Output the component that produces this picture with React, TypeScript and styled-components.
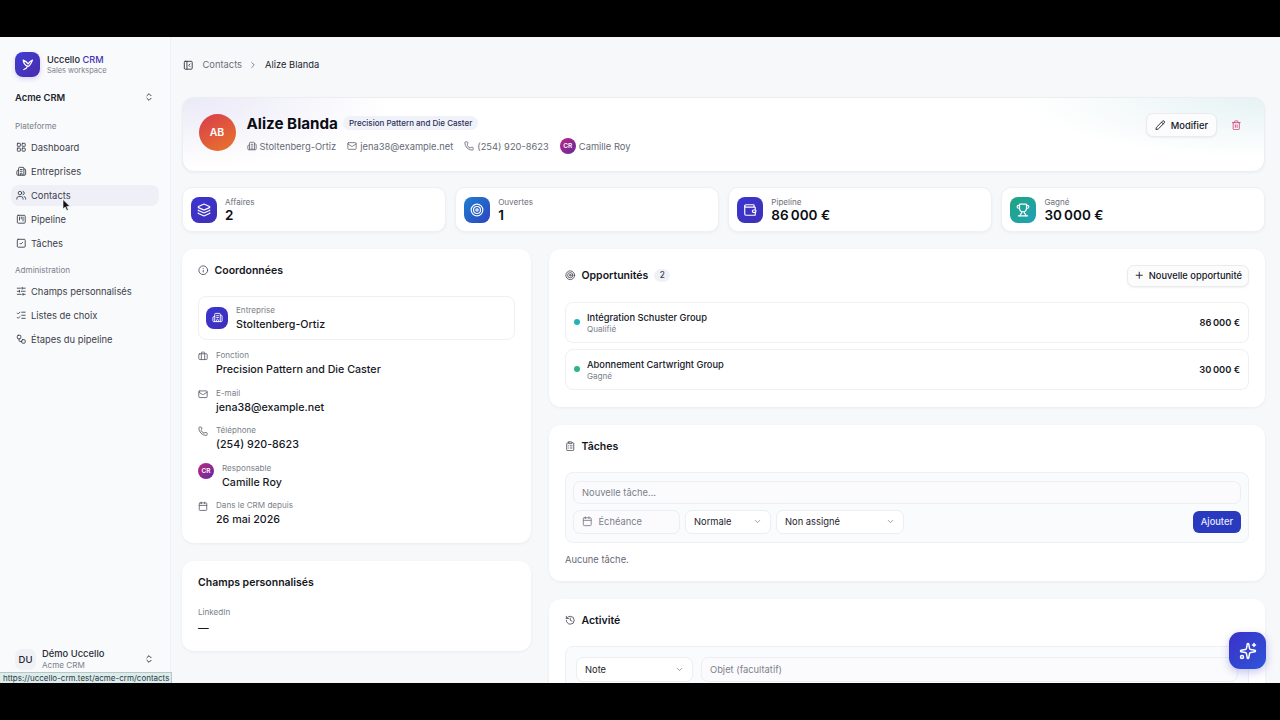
import React from "react";
import styled, { createGlobalStyle } from "styled-components";
import {
  Building2,
  Briefcase,
  Calendar,
  ChevronDown,
  ChevronRight,
  ChevronsUpDown,
  ClipboardList,
  History,
  Info,
  Layers,
  LayoutGrid,
  ListChecks,
  Mail,
  PanelLeftClose,
  Pencil,
  Phone,
  Plus,
  SlidersHorizontal,
  Sparkles,
  SquareCheck,
  SquareKanban,
  Target,
  Trash2,
  Trophy,
  Users,
  Wallet,
  Workflow,
} from "lucide-react";

const GlobalStyle = createGlobalStyle`
  html, body { margin: 0; padding: 0; background: #000; }
  body { font-family: Inter, "Noto Sans", sans-serif; color: #0b0d14; }
  * { box-sizing: border-box; }
`;

const Stage = styled.div`
  width: 1280px;
  height: 720px;
  padding: 37px 0;
  background: #000;
  overflow: hidden;
`;

const Frame = styled.div`
  position: relative;
  display: flex;
  height: 646px;
  background: #f7f8fa;
  overflow: hidden;
`;

const Sidebar = styled.aside`
  width: 170.5px;
  flex: none;
  display: flex;
  flex-direction: column;
  padding: 15px 11px 13px;
  background: #f9fafc;
  border-right: 1px solid #f0f1f4;
`;

const Brand = styled.div`
  display: flex;
  align-items: center;
  gap: 7px;
  padding-left: 4px;
`;

const Logo = styled.div`
  width: 25px;
  height: 25px;
  border-radius: 8px;
  display: flex;
  align-items: center;
  justify-content: center;
  color: #fff;
  background: linear-gradient(135deg, #3f3fd0, #4a2bb0);
  box-shadow: 0 2px 5px rgba(70, 60, 200, 0.2);
`;

const BrandName = styled.div`
  font-size: 9.2px;
  line-height: 12px;
  font-weight: 500;
  color: #20222c;
`;

const BrandAccent = styled.span`
  color: #4532b4;
`;

const BrandSub = styled.div`
  font-size: 7.4px;
  line-height: 9px;
  color: #7d818c;
`;

const Workspace = styled.div`
  display: flex;
  align-items: center;
  justify-content: space-between;
  margin-top: 13px;
  padding: 0 5px 0 4px;
  height: 14px;
  font-size: 9.4px;
  font-weight: 600;
  color: #22242e;
`;

const GroupLabel = styled.div`
  margin-top: ${({ $top }: { $top: number }) => $top}px;
  padding-left: 4px;
  height: 12px;
  line-height: 12px;
  font-size: 8.1px;
  color: #7b7f8a;
`;

const NavList = styled.nav`
  display: flex;
  flex-direction: column;
  gap: 3px;
  margin-top: 5px;
`;

const NavItem = styled.div<{ $active?: boolean }>`
  display: flex;
  align-items: center;
  gap: 4.5px;
  width: 148px;
  height: 21px;
  padding-left: 5px;
  border-radius: 8px;
  font-size: 9.4px;
  color: #3b3e4a;
  background: ${({ $active }) => ($active ? "#eff0f7" : "transparent")};
`;

const UserRow = styled.div`
  display: flex;
  align-items: center;
  margin-top: auto;
  padding: 0 5px 0 4px;
`;

const UserBadge = styled.div`
  width: 21px;
  height: 21px;
  border-radius: 7px;
  display: flex;
  align-items: center;
  justify-content: center;
  font-size: 9.5px;
  font-weight: 500;
  background: #f0f1f5;
  color: #22242e;
`;

const UserText = styled.div`
  flex: 1;
  margin-left: 6px;
`;

const UserName = styled.div`
  font-size: 9.4px;
  line-height: 12px;
  font-weight: 500;
  color: #2a2c36;
`;

const UserSub = styled.div`
  font-size: 8.1px;
  line-height: 10px;
  color: #7b7f8a;
`;

const Main = styled.main`
  flex: 1;
  min-width: 0;
  padding: 0 15px 0 11.5px;
  overflow: hidden;
`;

const Crumbs = styled.header`
  height: 60px;
  padding: 20.5px 0 0 1px;
  display: flex;
  align-items: flex-start;
  font-size: 9.35px;
  line-height: 14px;
  color: #6c707c;
`;

const CrumbIcon = styled.span`
  display: inline-flex;
  margin: 2px 9px 0 0;
  color: #2b2d38;
`;

const CrumbSep = styled.span`
  display: inline-flex;
  margin: 2px 7px 0 6px;
`;

const CrumbNow = styled.span`
  color: #22242e;
`;

const Hero = styled.section`
  display: flex;
  align-items: flex-start;
  height: 74.5px;
  padding: 15px 23px 0 15.5px;
  border-radius: 12px;
  border: 1px solid #eceef2;
  box-shadow: 0 1px 3px rgba(30, 35, 60, 0.05);
  background:
    radial-gradient(ellipse 210px 70px at 0% 0%, #eae9f7 0%, rgba(234, 233, 247, 0) 100%),
    radial-gradient(ellipse 240px 60px at 100% 0%, #e6f2f4 0%, rgba(230, 242, 244, 0) 100%),
    #fff;
`;

const HeroAvatar = styled.div`
  width: 37px;
  height: 37px;
  margin-top: 1px;
  border-radius: 50%;
  flex: none;
  display: flex;
  align-items: center;
  justify-content: center;
  font-size: 10.5px;
  font-weight: 600;
  color: #fff;
  background: linear-gradient(150deg, #d93c4c, #e8762a);
`;

const HeroBody = styled.div`
  flex: 1;
  margin-left: 11px;
`;

const HeroTop = styled.div`
  display: flex;
  align-items: center;
  gap: 5px;
  height: 20px;
`;

const HeroName = styled.h1`
  margin: 0;
  font-size: 15.2px;
  font-weight: 700;
  color: #0b0d14;
`;

const Chip = styled.span`
  padding: 0 6px;
  height: 14px;
  line-height: 14px;
  border-radius: 7px;
  font-size: 8px;
  font-weight: 500;
  color: #2f2f58;
  background: #f0f2f9;
`;

const MetaRow = styled.div`
  display: flex;
  align-items: center;
  gap: 11px;
  margin-top: 5px;
  height: 16px;
`;

const MetaItem = styled.span`
  display: inline-flex;
  align-items: center;
  gap: 3px;
  font-size: 9.35px;
  color: #666a76;
`;

const TinyAvatar = styled.span`
  width: 16px;
  height: 16px;
  flex: none;
  border-radius: 50%;
  display: inline-flex;
  align-items: center;
  justify-content: center;
  font-size: 6.5px;
  font-weight: 600;
  color: #fff;
  background: linear-gradient(135deg, #c0267f, #5f2aa0);
`;

const HeroActions = styled.div`
  display: flex;
  align-items: center;
  gap: 13.5px;
`;

const GhostButton = styled.button`
  display: inline-flex;
  align-items: center;
  gap: 5px;
  height: 24px;
  padding: 0 8px;
  border: 1px solid #e9ebef;
  border-radius: 7px;
  font: 500 9.3px Inter, sans-serif;
  color: #14161e;
  background: #fcfcfd;
  box-shadow: 0 1px 2px rgba(30, 35, 60, 0.06);
`;

const TrashIcon = styled.span`
  display: inline-flex;
  color: #d2487a;
`;

const Stats = styled.div`
  display: grid;
  grid-template-columns: repeat(4, 1fr);
  gap: 9.5px;
  margin-top: 15.5px;
`;

const StatCard = styled.div`
  display: flex;
  align-items: center;
  gap: 8px;
  height: 45px;
  padding: 0 8px;
  border-radius: 10px;
  border: 1px solid #eef0f3;
  background: #fff;
  box-shadow: 0 1px 3px rgba(30, 35, 60, 0.05);
`;

const IconTile = styled.div<{ $from: string; $to: string; $size: number }>`
  width: ${({ $size }) => $size}px;
  height: ${({ $size }) => $size}px;
  flex: none;
  display: flex;
  align-items: center;
  justify-content: center;
  border-radius: 8px;
  color: #fff;
  background: linear-gradient(135deg, ${({ $from }) => $from}, ${({ $to }) => $to});
`;

const StatLabel = styled.div`
  font-size: 8.1px;
  line-height: 10px;
  color: #6c707c;
`;

const StatValue = styled.div`
  font-size: 13.5px;
  line-height: 16px;
  font-weight: 600;
  color: #0b0d14;
`;

const Columns = styled.div`
  display: grid;
  grid-template-columns: 349px 1fr;
  gap: 18px;
  margin-top: 16.5px;
`;

const Column = styled.div`
  display: flex;
  flex-direction: column;
  gap: 18px;
`;

const Card = styled.section<{ $height: number; $top?: number }>`
  height: ${({ $height }) => $height}px;
  padding: ${({ $top }) => $top ?? 14}px 16px 0;
  border-radius: 12px;
  background: #fff;
  box-shadow: 0 1px 3px rgba(30, 35, 60, 0.06);
`;

const CardHead = styled.div`
  display: flex;
  align-items: center;
  gap: 6px;
  height: 15px;
  color: #4d505c;
`;

const CardTitle = styled.h2`
  margin: 0;
  font-size: 10.5px;
  font-weight: 600;
  color: #14161e;
`;

const CountBadge = styled.span`
  width: 16px;
  height: 13px;
  margin-left: 0;
  border-radius: 7px;
  text-align: center;
  font-size: 8.25px;
  line-height: 13px;
  font-weight: 500;
  color: #3e4150;
  background: #f0f1f7;
`;

const CompanyBox = styled.div`
  display: flex;
  align-items: center;
  gap: 8px;
  height: 44px;
  margin-top: 18px;
  padding: 0 7px;
  border: 1px solid #eef0f3;
  border-radius: 8px;
`;

const Label = styled.div`
  font-size: 8.1px;
  line-height: 11px;
  color: #7b7f8a;
`;

const Value = styled.div`
  margin-top: 2px;
  font-size: 10.7px;
  line-height: 13px;
  font-weight: 500;
  color: #16181f;
`;

const Details = styled.div`
  display: flex;
  flex-direction: column;
  gap: 11.5px;
  margin-top: 10.5px;
`;

const Detail = styled.div`
  display: flex;
  align-items: flex-start;
  gap: 8px;
  color: #5a5d69;
`;

const DetailIcon = styled.span`
  display: inline-flex;
  width: 10px;
  margin-top: 1px;
  flex: none;
`;

const CustomField = styled.div`
  margin-top: 17px;
`;

const CustomValue = styled(Value)`
  margin-top: 4px;
`;

const HeadRow = styled.div`
  display: flex;
  align-items: center;
  justify-content: space-between;
  height: 22px;
`;

const OutlineButton = styled(GhostButton)`
  height: 22px;
  gap: 4px;
  padding: 0 6px;
`;

const DealList = styled.div`
  display: flex;
  flex-direction: column;
  gap: 6px;
  margin-top: 15px;
`;

const Deal = styled.div`
  display: flex;
  align-items: center;
  height: 41px;
  padding: 0 8px;
  border: 1px solid #eef0f3;
  border-radius: 8px;
`;

const Dot = styled.span<{ $color: string }>`
  width: 6px;
  height: 6px;
  flex: none;
  border-radius: 50%;
  background: ${({ $color }) => $color};
`;

const DealText = styled.div`
  flex: 1;
  margin-left: 7px;
  padding-top: 2px;
`;

const DealName = styled.div`
  font-size: 9.3px;
  line-height: 12px;
  font-weight: 500;
  color: #16181f;
`;

const DealStage = styled.div`
  font-size: 8.1px;
  line-height: 11px;
  color: #7b7f8a;
`;

const Amount = styled.div`
  font-size: 9.3px;
  font-weight: 600;
  color: #16181f;
`;

const Panel = styled.div`
  margin-top: 18px;
  padding: 8px 7px;
  border: 1px solid #eef0f3;
  border-radius: 8px;
  background: #fafbfd;
`;

const Field = styled.div<{ $width?: number; $muted?: boolean }>`
  display: flex;
  align-items: center;
  justify-content: space-between;
  gap: 5px;
  flex: ${({ $width }) => ($width ? "none" : "1")};
  width: ${({ $width }) => ($width ? `${$width}px` : "auto")};
  height: 24px;
  padding: 0 8px;
  border: 1px solid #eceef2;
  border-radius: 7px;
  font-size: 9.35px;
  color: ${({ $muted }) => ($muted ? "#7b7f8a" : "#22242e")};
  background: ${({ $muted }) => ($muted ? "#fbfbfd" : "#fff")};
`;

const TaskInput = styled(Field)`
  height: 23px;
`;

const DateField = styled(Field)`
  justify-content: flex-start;
  gap: 6px;
`;

const FieldRow = styled.div`
  display: flex;
  align-items: center;
  gap: 5px;
  margin-top: 6px;
`;

const Spacer = styled.div`
  flex: 1;
`;

const PrimaryButton = styled.button`
  height: 22px;
  padding: 0 8px;
  border: 0;
  border-radius: 6px;
  font: 500 9.3px Inter, sans-serif;
  color: #e6e9ff;
  background: #2a3abf;
`;

const EmptyNote = styled.div`
  margin-top: 11px;
  font-size: 9.35px;
  line-height: 12px;
  color: #666a76;
`;

const ActivityPanel = styled(Panel)`
  margin-top: 18px;
  padding: 10px 10px 0;
  height: 60px;
`;

const ActivityRow = styled.div`
  display: flex;
  gap: 8px;
`;

const ActivityField = styled(Field)`
  height: 25px;
`;

const Fab = styled.button`
  position: absolute;
  right: 14px;
  bottom: 14px;
  width: 37px;
  height: 37px;
  border: 0;
  border-radius: 11px;
  display: flex;
  align-items: center;
  justify-content: center;
  color: #fff;
  background: linear-gradient(135deg, #3b30c8, #2f55d8);
  box-shadow: 0 3px 8px rgba(60, 60, 210, 0.3);
`;

const StatusBar = styled.div`
  position: absolute;
  left: 0;
  bottom: 0;
  width: 172px;
  height: 11px;
  padding-left: 3px;
  font-size: 8px;
  line-height: 11px;
  white-space: nowrap;
  color: #2c3a42;
  background: #dcecec;
  border-top: 1px solid #b9c6c6;
  border-right: 1px solid #b9c6c6;
`;

const Cursor = styled.svg`
  position: absolute;
  left: 62px;
  top: 162px;
`;

const nav = [
  { label: "Dashboard", Icon: LayoutGrid },
  { label: "Entreprises", Icon: Building2 },
  { label: "Contacts", Icon: Users, active: true },
  { label: "Pipeline", Icon: SquareKanban },
  { label: "Tâches", Icon: SquareCheck },
];

const admin = [
  { label: "Champs personnalisés", Icon: SlidersHorizontal },
  { label: "Listes de choix", Icon: ListChecks },
  { label: "Étapes du pipeline", Icon: Workflow },
];

const stats = [
  { label: "Affaires", value: "2", Icon: Layers, from: "#3a35d0", to: "#3f2fb8" },
  { label: "Ouvertes", value: "1", Icon: Target, from: "#1f7fd0", to: "#2c45c0" },
  { label: "Pipeline", value: "86\u202f000\u00a0€", Icon: Wallet, from: "#3a35d0", to: "#3f2fb8" },
  { label: "Gagné", value: "30\u202f000\u00a0€", Icon: Trophy, from: "#1fa57f", to: "#22a0b8" },
];

const details = [
  { label: "Fonction", value: "Precision Pattern and Die Caster", Icon: Briefcase },
  { label: "E-mail", value: "jena38@example.net", Icon: Mail },
  { label: "Téléphone", value: "(254) 920-8623", Icon: Phone },
];

function BirdLogo() {
  return (
    <svg width="15" height="15" viewBox="0 0 24 24" fill="none" stroke="currentColor" strokeWidth="2" strokeLinecap="round" strokeLinejoin="round">
      <path d="M5 5c1 6 3 9 8 10 3-1 5-5 7-10-3 1-5 3-7 6-2-3-5-5-8-6z" />
      <path d="M12 15c-1 3-3 4-6 5" />
    </svg>
  );
}

function App() {
  return (
    <Stage>
      <GlobalStyle />
      <Frame>
        <Sidebar>
          <Brand>
            <Logo>
              <BirdLogo />
            </Logo>
            <div>
              <BrandName>
                Uccello <BrandAccent>CRM</BrandAccent>
              </BrandName>
              <BrandSub>Sales workspace</BrandSub>
            </div>
          </Brand>
          <Workspace>
            Acme CRM
            <ChevronsUpDown size={10} />
          </Workspace>
          <GroupLabel $top={16}>Plateforme</GroupLabel>
          <NavList>
            {nav.map(({ label, Icon, active }) => (
              <NavItem key={label} $active={active}>
                <Icon size={10.5} />
                {label}
              </NavItem>
            ))}
          </NavList>
          <GroupLabel $top={10}>Administration</GroupLabel>
          <NavList>
            {admin.map(({ label, Icon }) => (
              <NavItem key={label}>
                <Icon size={10.5} />
                {label}
              </NavItem>
            ))}
          </NavList>
          <UserRow>
            <UserBadge>DU</UserBadge>
            <UserText>
              <UserName>Démo Uccello</UserName>
              <UserSub>Acme CRM</UserSub>
            </UserText>
            <ChevronsUpDown size={10} />
          </UserRow>
        </Sidebar>

        <Main>
          <Crumbs>
            <CrumbIcon>
              <PanelLeftClose size={10.5} />
            </CrumbIcon>
            Contacts
            <CrumbSep>
              <ChevronRight size={10} />
            </CrumbSep>
            <CrumbNow>Alize Blanda</CrumbNow>
          </Crumbs>

          <Hero>
            <HeroAvatar>AB</HeroAvatar>
            <HeroBody>
              <HeroTop>
                <HeroName>Alize Blanda</HeroName>
                <Chip>Precision Pattern and Die Caster</Chip>
              </HeroTop>
              <MetaRow>
                <MetaItem>
                  <Building2 size={10} />
                  Stoltenberg-Ortiz
                </MetaItem>
                <MetaItem>
                  <Mail size={10} />
                  jena38@example.net
                </MetaItem>
                <MetaItem>
                  <Phone size={10} />
                  (254) 920-8623
                </MetaItem>
                <MetaItem>
                  <TinyAvatar>CR</TinyAvatar>
                  Camille Roy
                </MetaItem>
              </MetaRow>
            </HeroBody>
            <HeroActions>
              <GhostButton>
                <Pencil size={10.5} />
                Modifier
              </GhostButton>
              <TrashIcon>
                <Trash2 size={10.5} />
              </TrashIcon>
            </HeroActions>
          </Hero>

          <Stats>
            {stats.map(({ label, value, Icon, from, to }) => (
              <StatCard key={label}>
                <IconTile $from={from} $to={to} $size={26}>
                  <Icon size={14} />
                </IconTile>
                <div>
                  <StatLabel>{label}</StatLabel>
                  <StatValue>{value}</StatValue>
                </div>
              </StatCard>
            ))}
          </Stats>

          <Columns>
            <Column>
              <Card $height={294}>
                <CardHead>
                  <Info size={10.5} />
                  <CardTitle>Coordonnées</CardTitle>
                </CardHead>
                <CompanyBox>
                  <IconTile $from="#3a35d0" $to="#3f2fb8" $size={22}>
                    <Building2 size={11} />
                  </IconTile>
                  <div>
                    <Label>Entreprise</Label>
                    <Value>Stoltenberg-Ortiz</Value>
                  </div>
                </CompanyBox>
                <Details>
                  {details.map(({ label, value, Icon }) => (
                    <Detail key={label}>
                      <DetailIcon>
                        <Icon size={10.5} />
                      </DetailIcon>
                      <div>
                        <Label>{label}</Label>
                        <Value>{value}</Value>
                      </div>
                    </Detail>
                  ))}
                  <Detail>
                    <TinyAvatar>CR</TinyAvatar>
                    <div>
                      <Label>Responsable</Label>
                      <Value>Camille Roy</Value>
                    </div>
                  </Detail>
                  <Detail>
                    <DetailIcon>
                      <Calendar size={10.5} />
                    </DetailIcon>
                    <div>
                      <Label>Dans le CRM depuis</Label>
                      <Value>26 mai 2026</Value>
                    </div>
                  </Detail>
                </Details>
              </Card>
              <Card $height={90}>
                <CardHead>
                  <CardTitle>Champs personnalisés</CardTitle>
                </CardHead>
                <CustomField>
                  <Label>LinkedIn</Label>
                  <CustomValue>—</CustomValue>
                </CustomField>
              </Card>
            </Column>

            <Column>
              <Card $height={158} $top={16}>
                <HeadRow>
                  <CardHead>
                    <Target size={10.5} />
                    <CardTitle>Opportunités</CardTitle>
                    <CountBadge>2</CountBadge>
                  </CardHead>
                  <OutlineButton>
                    <Plus size={10.5} />
                    Nouvelle opportunité
                  </OutlineButton>
                </HeadRow>
                <DealList>
                  <Deal>
                    <Dot $color="#22b3b8" />
                    <DealText>
                      <DealName>Intégration Schuster Group</DealName>
                      <DealStage>Qualifié</DealStage>
                    </DealText>
                    <Amount>86{"\u202f"}000{"\u00a0"}€</Amount>
                  </Deal>
                  <Deal>
                    <Dot $color="#2bb58a" />
                    <DealText>
                      <DealName>Abonnement Cartwright Group</DealName>
                      <DealStage>Gagné</DealStage>
                    </DealText>
                    <Amount>30{"\u202f"}000{"\u00a0"}€</Amount>
                  </Deal>
                </DealList>
              </Card>

              <Card $height={156}>
                <CardHead>
                  <ClipboardList size={10.5} />
                  <CardTitle>Tâches</CardTitle>
                </CardHead>
                <Panel>
                  <TaskInput $muted>Nouvelle tâche...</TaskInput>
                  <FieldRow>
                    <DateField $width={107} $muted>
                      <Calendar size={10.5} />
                      Échéance
                    </DateField>
                    <Field $width={86}>
                      Normale
                      <ChevronDown size={9} color="#7b7f8a" />
                    </Field>
                    <Field $width={128}>
                      Non assigné
                      <ChevronDown size={9} color="#7b7f8a" />
                    </Field>
                    <Spacer />
                    <PrimaryButton>Ajouter</PrimaryButton>
                  </FieldRow>
                </Panel>
                <EmptyNote>Aucune tâche.</EmptyNote>
              </Card>

              <Card $height={110}>
                <CardHead>
                  <History size={10.5} />
                  <CardTitle>Activité</CardTitle>
                </CardHead>
                <ActivityPanel>
                  <ActivityRow>
                    <ActivityField $width={117}>
                      Note
                      <ChevronDown size={9} color="#7b7f8a" />
                    </ActivityField>
                    <ActivityField $muted>Objet (facultatif)</ActivityField>
                  </ActivityRow>
                </ActivityPanel>
              </Card>
            </Column>
          </Columns>
        </Main>

        <Fab>
          <Sparkles size={18} />
        </Fab>
        <StatusBar>https://uccello-crm.test/acme-crm/contacts</StatusBar>
        <Cursor width="9" height="13" viewBox="0 0 9 13">
          <path d="M1 0.5 L1 10 L3.2 8 L4.8 11.5 L6.3 10.8 L4.7 7.5 L7.8 7.3 Z" fill="#111" stroke="#fff" strokeWidth="0.6" />
        </Cursor>
      </Frame>
    </Stage>
  );
}

export default App;
